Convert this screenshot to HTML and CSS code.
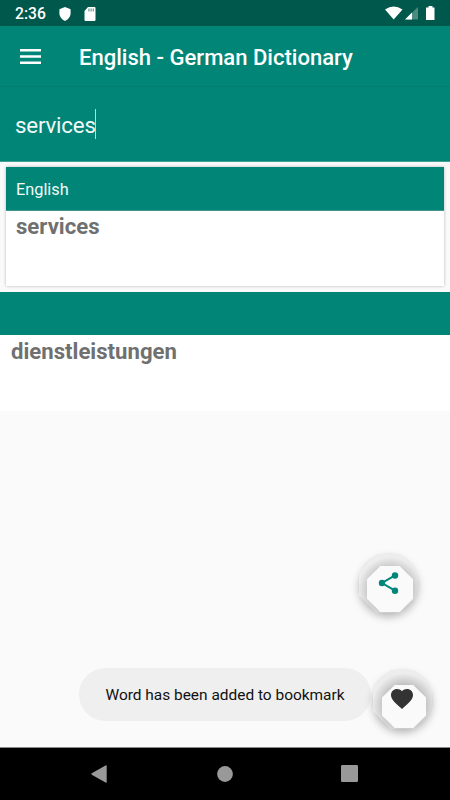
FILE: index.html
```html
<!DOCTYPE html>
<html lang="en">
<head>
<meta charset="utf-8">
<title>English - German Dictionary</title>
<link rel="stylesheet" href="styles.css">
</head>
<body>
<div class="screen">
  <header class="status">
    <span class="clock">2:36</span>
    <svg class="shield" width="12" height="14" viewBox="0 0 12 14"><path d="M6 0 11.6 2.2V7Q11 11.6 6 14 1 11.6.4 7V2.2Z"/></svg>
    <svg class="sd" width="12" height="14" viewBox="0 0 12 14"><path d="M4 0H10.5Q11.5 0 11.5 1V13Q11.5 14 10.500 14H1.500Q.5 14 .5 13V4Z"/><path class="slots" d="M4.300 1.500h1.200v3H4.300zM6.500 1.500h1.200v3H6.500zM8.700 1.500h1.200v3H8.700z"/></svg>
    <svg class="signals" width="51" height="15" viewBox="0 0 51 15"><path d="M0 3.500Q8.700-2.500 17.500 3.500L8.700 13.500Z"/><path class="dim" d="M33 1V13.500H20Z"/><path d="M27 6.500V13.500H20Z"/><path d="M43.500 0H47.500V1.500H49.500V14H41V1.500H43.500Z"/></svg>
  </header>
  <div class="toolbar">
    <svg width="21" height="15" viewBox="0 0 21 15"><path d="M0 0H21V2.400H0zM0 6.300H21V8.700H0zM0 12.600H21V15H0z"/></svg>
    <h1>English - German Dictionary</h1>
  </div>
  <div class="search"><span class="query">services</span><span class="caret"></span></div>
  <main>
    <section class="card">
      <div class="language">English</div>
      <p class="word">services</p>
    </section>
    <section class="translation">
      <div class="band"></div>
      <p class="word">dienstleistungen</p>
    </section>
  </main>
  <div class="toast">Word has been added to bookmark</div>
  <div class="fab share">
    <div class="face"></div>
    <svg width="22" height="22" viewBox="0 0 22 22"><path class="lines" d="M17 3.300 4 11 17 18.700"/><circle cx="17" cy="3.500" r="3.200"/><circle cx="4" cy="11" r="3.200"/><circle cx="17" cy="18.700" r="3.200"/></svg>
  </div>
  <div class="fab like">
    <div class="face"></div>
    <svg width="22" height="20" viewBox="2 3 20 18.350" preserveAspectRatio="none"><path d="M12 21.350l-1.450-1.320C5.400 15.360 2 12.280 2 8.500 2 5.420 4.420 3 7.500 3c1.740 0 3.410.81 4.500 2.090C13.090 3.810 14.760 3 16.500 3 19.580 3 22 5.420 22 8.500c0 3.780-3.400 6.860-8.550 11.540L12 21.350z"/></svg>
  </div>
  <nav class="navbar">
    <svg width="16" height="18" viewBox="0 0 16 18"><path d="M15.700 1V17Q15.700 18.200 14.500 17.500L.8 9.700Q0 9 .8 8.300L14.500.5Q15.700-.2 15.700 1Z"/></svg>
    <svg class="home" width="16" height="16" viewBox="0 0 16 16"><circle cx="8" cy="8" r="7.900"/></svg>
    <svg width="17" height="17" viewBox="0 0 17 17"><rect width="17" height="17" rx="1.200"/></svg>
  </nav>
</div>
</body>
</html>
```

FILE: styles.css
```css
* { box-sizing: border-box; }
body { margin: 0; font-family: Roboto, sans-serif; }
svg { display: block; flex: none; }
h1, p { margin: 0; }
.screen {
  position: relative;
  display: flex;
  flex-direction: column;
  width: 450px;
  height: 800px;
  overflow: hidden;
  background: #fafafa;
}
.status {
  display: flex;
  align-items: center;
  height: 26px;
  padding: 1px 15px 0;
  background: #00574b;
  color: #fff;
}
.status svg { fill: #fff; }
.clock { width: 44px; font-size: 15.700px; font-weight: 500; line-height: 26px; }
.sd { margin-left: 13px; }
.sd .slots { fill: #6d9990; }
.signals { margin-left: auto; margin-right: -1px; }
.signals .dim { fill: #4d8b81; }
.toolbar {
  display: flex;
  align-items: center;
  gap: 38px;
  height: 61px;
  padding: 1px 20px 0;
  background: #008577;
  border-bottom: 1px solid #007d70;
  color: #fff;
}
.toolbar svg { fill: #fff; }
.toolbar h1 { padding-top: 2px; font-size: 22.050px; font-weight: 500; line-height: 30px; white-space: nowrap; }
.search {
  display: flex;
  align-items: center;
  height: 75px;
  padding: 0 15px;
  background: #008577;
  border-bottom: 1px solid #40a095;
  color: #f4faf9;
}
.query { padding-top: 2px; font-size: 22.300px; letter-spacing: -.2px; line-height: 30px; }
.caret { width: 1px; height: 30px; margin-left: -1px; background: #b7dcd8; }
.card {
  height: 119px;
  margin: 5px 6px 6px;
  background: #fff;
  box-shadow: 0 0 3px #0004;
}
.language {
  height: 44px;
  padding: 1px 10px 0;
  background: #008577;
  border-bottom: 1px solid #45978e;
  color: #f4faf9;
  font-size: 16.300px;
  line-height: 44px;
}
.word { padding: 3px 11px 0; color: #707070; font-size: 22.150px; font-weight: 700; line-height: 26px; }
.card .word { padding: 2px 10px 0; }
.translation { height: 119px; background: #fff; }
.band { height: 43px; background: #008577; }
.toast {
  position: absolute;
  left: 79px;
  top: 668px;
  width: 292px;
  height: 53px;
  border-radius: 27px;
  background: #efefef;
  color: #111;
  font-size: 15.450px;
  line-height: 54px;
  text-align: center;
  white-space: nowrap;
}
.fab {
  position: absolute;
  width: 59px;
  height: 59px;
  border-radius: 50%;
  background: linear-gradient(#f3f3f3, #dadada 55%, #cacaca);
  box-shadow: 0 4px 8px #0004, 0 0 3px #0001;
}
.fab::before {
  content: "";
  position: absolute;
  inset: 0;
  background: radial-gradient(circle at 53% 60%, #aaa 34%, #cacaca 48%, #ededed 68%);
  clip-path: polygon(30% 0, 70% 0, 100% 30%, 100% 70%, 70% 100%, 30% 100%, 0 70%, 0 30%);
}
.face {
  position: absolute;
  background: #fafafa;
  clip-path: polygon(29% 0, 71% 0, 100% 29%, 100% 71%, 71% 100%, 29% 100%, 0 71%, 0 29%);
}
.fab svg { position: absolute; }
.share { left: 359px; top: 554px; }
.share .face { left: 8px; top: 12px; width: 46px; height: 46px; }
.share svg { left: 19px; top: 18px; fill: #008577; }
.share .lines { fill: none; stroke: #008577; stroke-width: 2; }
.like { left: 373px; top: 670px; }
.like .face { left: 9px; top: 15px; width: 44px; height: 43px; }
.like svg { left: 18px; top: 19px; fill: #333; }
.navbar {
  display: flex;
  align-items: center;
  justify-content: space-between;
  height: 53px;
  margin-top: auto;
  padding: 0 92px 1px 91px;
  border-top: 1px solid #888;
  background: #000;
}
.navbar svg { fill: #999; }
.home { margin-left: 1px; }
```
